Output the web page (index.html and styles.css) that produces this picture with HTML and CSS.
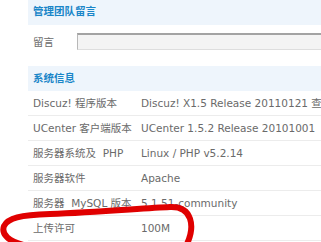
FILE: index.html
```html
<!DOCTYPE html>
<html lang="zh">
<head>
<meta charset="utf-8">
<title>系统信息</title>
<link rel="stylesheet" href="styles.css">
</head>
<body>
<div class="page">
  <div class="panel">
    <div class="partition first">管理团队留言</div>
    <div class="msg-row">
      <span class="label">留言</span>
      <div class="input"></div>
    </div>
    <div class="partition second">系统信息</div>
    <div class="row"><span class="k">Discuz! 程序版本</span><span class="v">Discuz! X1.5 Release 20110121 查看最新版本</span></div>
    <div class="row"><span class="k">UCenter 客户端版本</span><span class="v">UCenter 1.5.2 Release 20101001</span></div>
    <div class="row"><span class="k">服务器系统及&nbsp; PHP</span><span class="v">Linux / PHP v5.2.14</span></div>
    <div class="row"><span class="k">服务器软件</span><span class="v">Apache</span></div>
    <div class="row"><span class="k">服务器&nbsp; MySQL 版本</span><span class="v">5.1.51-community</span></div>
    <div class="row"><span class="k">上传许可</span><span class="v">100M</span></div>
  </div>
  <svg class="annot" width="321" height="242" viewBox="0 0 321 242">
    <path d="M 28 246 C 8 242, 1 234, 4 226 C 8 218, 20 215, 50 214 C 100 212, 145 208, 170 207 C 192 206, 196 226, 186 246" fill="none" stroke="#e00000" stroke-width="6" stroke-linecap="round"/>
  </svg>
</div>
</body>
</html>
```
FILE: styles.css
```css
html, body {
  margin: 0;
  padding: 0;
  background: #fff;
}
.page {
  position: relative;
  width: 321px;
  height: 242px;
  overflow: hidden;
  font-family: "DejaVu Sans", Verdana, "Noto Sans CJK SC", sans-serif;
  font-size: 10.5px;
  color: #6a6a6a;
}
.panel {
  margin-left: 28px;
  width: 400px;
}
.partition {
  background: #eef5fc;
  color: #1a86c8;
  font-weight: bold;
  padding-left: 5px;
  height: 25px;
}
.partition.first {
  line-height: 22px;
}
.partition.second {
  line-height: 25px;
}
.msg-row {
  display: flex;
  align-items: center;
  height: 32px;
  margin-bottom: 9px;
  padding-left: 5px;
}
.label {
  width: 44px;
  flex: none;
}
.input {
  box-sizing: border-box;
  width: 300px;
  height: 17px;
  background: #f4f4f4;
  border-top: 2px solid #a3a3a3;
  border-left: 1px solid #b8b8b8;
  border-bottom: 1px solid #dedede;
}
.row {
  box-sizing: border-box;
  display: flex;
  height: 25px;
  line-height: 24px;
  border-bottom: 1px solid #ececec;
  padding-left: 5px;
  white-space: nowrap;
}
.k {
  width: 108px;
  flex: none;
}
.v {
  flex: none;
}
.annot {
  position: absolute;
  left: 0;
  top: 0;
}
```
